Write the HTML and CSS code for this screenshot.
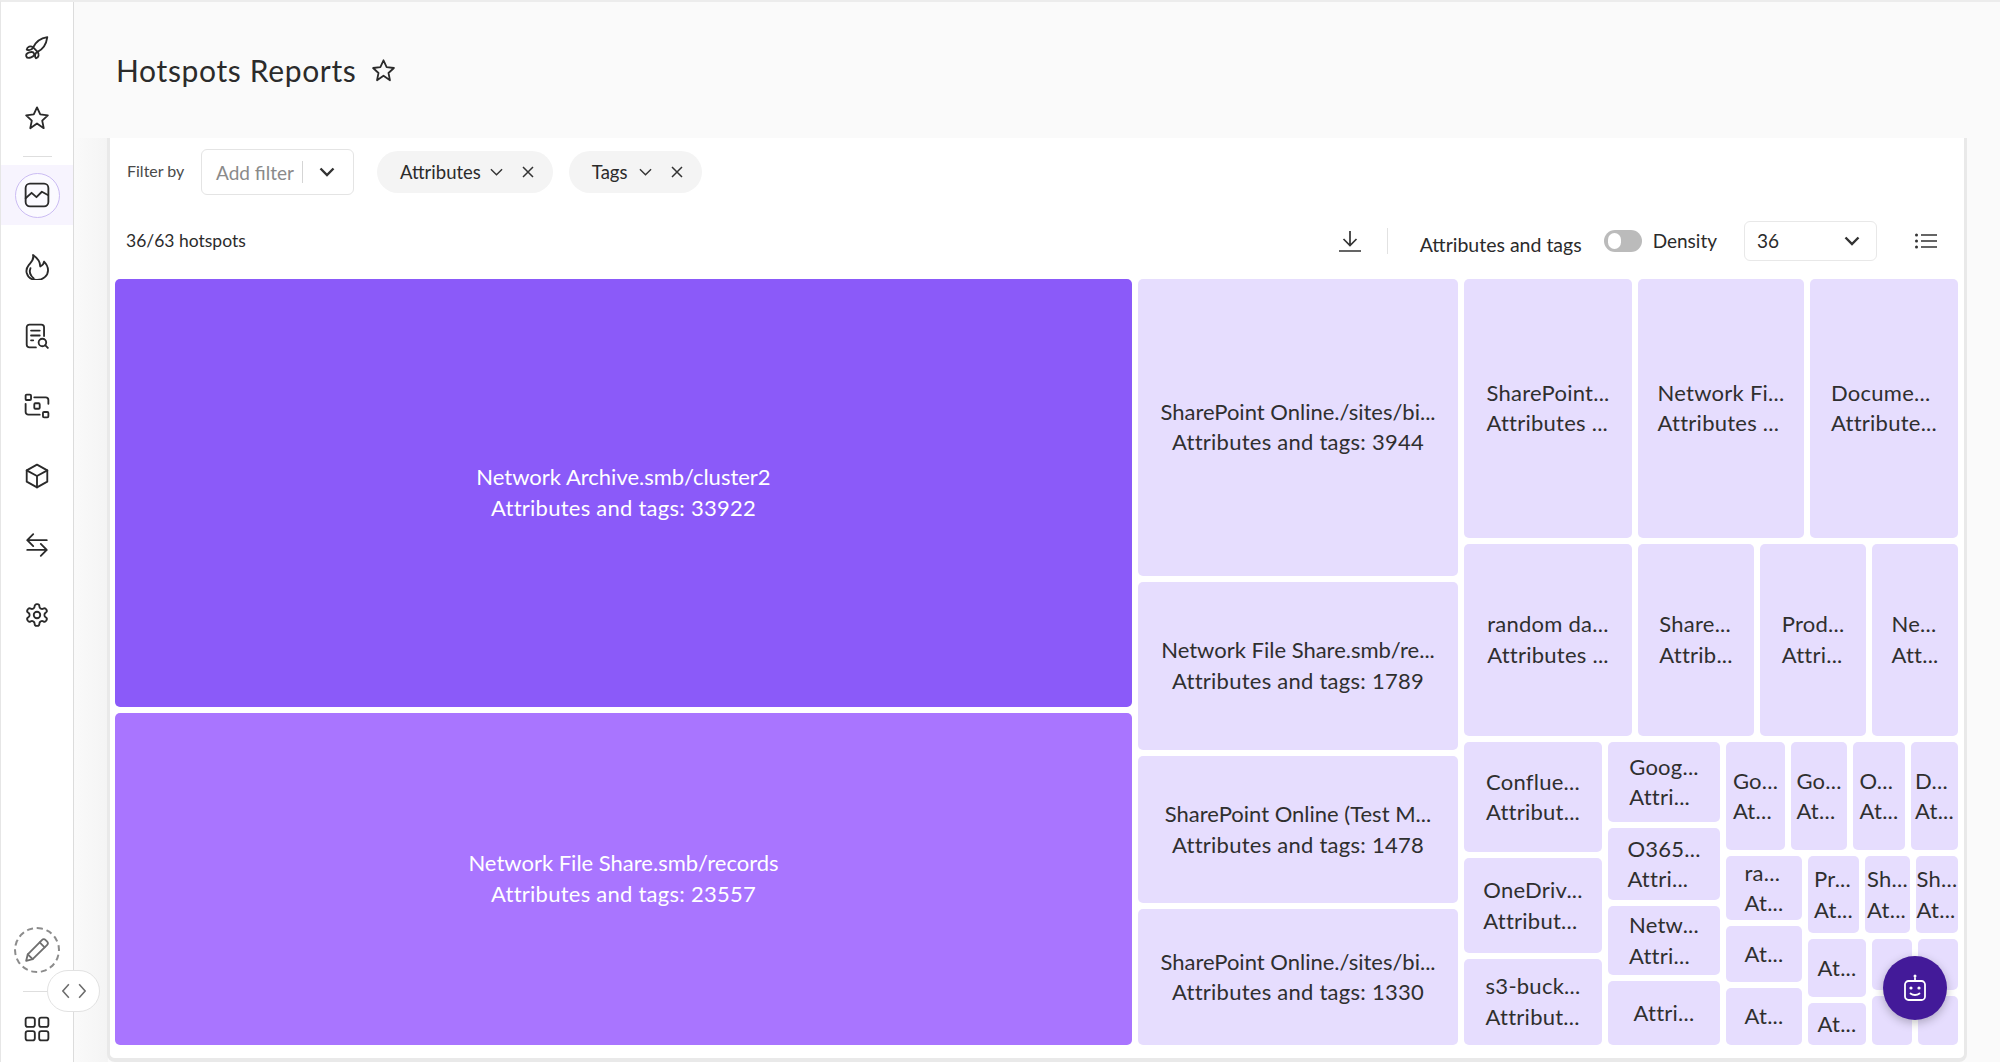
FILE: index.html
```html
<!DOCTYPE html>
<html lang="en">
<head>
    <meta charset="UTF-8">
    <title>Hotspots Reports</title>
    <link rel="stylesheet" href="styles.css">
</head>
<body>
    <div class="app">
        <nav class="sidebar">
            <a class="nav-item">
                <svg class="icon" viewBox="0 0 24 24"><path d="M21.500 2C15 3 10.500 7 8.500 11.500l4 4c4.500-2 8-6.500 9-13.500z"/><path d="M8.500 11.500C6 9.500 3 10.500 2.500 13.500c2.500 1 4.500.5 6-2z"/><ellipse cx="5.700" cy="18.400" rx="3.800" ry="2.400" transform="rotate(-20 5.700 18.400)"/><path d="M12.500 15.500c2 2 1 5.500-1.500 6-1.500-2-1-4.500 1.500-6z"/></svg>
            </a>
            <a class="nav-item">
                <svg class="icon" viewBox="0 0 24 24"><path d="M12 2.200l3 6.500 7 .9-5.200 4.800 1.400 7L12 17l-6.200 4.400 1.400-7L2 9.600l7-.9z"/></svg>
            </a>
            <div class="nav-divider"></div>
            <a class="nav-item nav-item-active">
                <span class="nav-ring">
                    <svg class="icon" viewBox="0 0 24 24"><rect x="1.500" y="1.500" width="21" height="21" rx="4"/><path d="M1.500 15l5.500-5 4.500 4 5-5 5.500 3"/></svg>
                </span>
            </a>
            <div class="nav-list">
                <a class="nav-item">
                    <svg class="icon" viewBox="0 0 24 24"><path d="M8.300 1C9.500 5 7 7 4.500 10c-2 2.500-2.700 5-2 7.500C3.700 21.500 7.500 24 12 24c5.500 0 10.200-4 10.200-9 0-3-1.700-6-3.700-8 0 2-1.500 3.500-3.500 4.500C15 7.500 12 3.500 8.300 1z"/><path d="M6 13c-1.300 3-.5 6.500 3 9.500"/></svg>
                </a>
                <a class="nav-item">
                    <svg class="icon" viewBox="0 0 24 24"><path d="M11 22.500H5a2.500 2.500 0 0 1-2.500-2.500V4A2.500 2.500 0 0 1 5 1.500h11A2.500 2.500 0 0 1 18.500 4v8"/><path d="M6.500 7h8M6.500 11.500h8M6.500 16h2"/><circle cx="17" cy="18" r="3.500"/><path d="M19.500 20.500l2.500 2.500"/></svg>
                </a>
                <a class="nav-item">
                    <svg class="icon" viewBox="0 0 24 24"><rect x="1.500" y="1.500" width="5" height="5" rx="1"/><rect x="9.500" y="9.500" width="5" height="5" rx="1"/><rect x="17.500" y="17.500" width="5" height="5" rx="1"/><path d="M9.500 4H20a2.500 2.500 0 0 1 2.500 2.500V10"/><path d="M14.500 20H4a2.500 2.500 0 0 1-2.500-2.500V10"/></svg>
                </a>
                <a class="nav-item">
                    <svg class="icon" viewBox="0 0 24 24"><path d="M12 1.500l9.500 5.300v10.400L12 22.500l-9.500-5.300V6.800z"/><path d="M2.500 6.800L12 12l9.500-5.200M12 12v10.500"/></svg>
                </a>
                <a class="nav-item">
                    <svg class="icon" viewBox="0 0 24 24"><path d="M21 7.500H3M8.500 2L3 7.500 8.500 13"/><path d="M3 16.500h18M15.500 11l5.500 5.500-5.500 5.500"/></svg>
                </a>
                <a class="nav-item">
                    <svg class="icon" viewBox="0 0 24 24"><path d="M12.220 2h-.44a2 2 0 0 0-2 2v.18a2 2 0 0 1-1 1.730l-.43.25a2 2 0 0 1-2 0l-.15-.08a2 2 0 0 0-2.730.73l-.22.38a2 2 0 0 0 .73 2.730l.15.1a2 2 0 0 1 1 1.720v.51a2 2 0 0 1-1 1.740l-.15.09a2 2 0 0 0-.73 2.730l.22.38a2 2 0 0 0 2.730.73l.15-.08a2 2 0 0 1 2 0l.43.25a2 2 0 0 1 1 1.730V20a2 2 0 0 0 2 2h.44a2 2 0 0 0 2-2v-.18a2 2 0 0 1 1-1.730l.43-.25a2 2 0 0 1 2 0l.15.08a2 2 0 0 0 2.730-.73l.22-.39a2 2 0 0 0-.73-2.730l-.15-.08a2 2 0 0 1-1-1.740v-.5a2 2 0 0 1 1-1.740l.15-.09a2 2 0 0 0 .73-2.730l-.22-.38a2 2 0 0 0-2.730-.73l-.15.08a2 2 0 0 1-2 0l-.43-.25a2 2 0 0 1-1-1.730V4a2 2 0 0 0-2-2z"/><circle cx="12" cy="12" r="3"/></svg>
                </a>
            </div>
            <div class="nav-bottom">
                <span class="edit-ring">
                    <svg class="icon icon-grey" viewBox="0 0 24 24"><path d="M2 22l1.500-6L16.500 2.800a2.500 2.500 0 0 1 3.500 0l1.200 1.200a2.500 2.500 0 0 1 0 3.500L8 20.500z"/><path d="M14.500 5l4.500 4.500M3.500 16L8 20.500"/></svg>
                </span>
                <div class="nav-divider nav-divider-short"></div>
                <a class="nav-item nav-item-small">
                    <svg class="icon" viewBox="0 0 24 24"><rect x="1.500" y="1.500" width="8.500" height="8.500" rx="2"/><rect x="14" y="1.500" width="8.500" height="8.500" rx="2"/><rect x="1.500" y="14" width="8.500" height="8.500" rx="2"/><rect x="14" y="14" width="8.500" height="8.500" rx="2"/></svg>
                </a>
            </div>
            <button class="collapse-btn">
                <svg viewBox="0 0 28 18"><path d="M8 1L1 9l7 8M20 1l7 8-7 8"/></svg>
            </button>
        </nav>

        <main class="main">
            <header class="page-header">
                <h1>Hotspots Reports</h1>
                <svg class="icon icon-title" viewBox="0 0 24 24"><path d="M12 2.200l3 6.500 7 .9-5.200 4.800 1.400 7L12 17l-6.200 4.400 1.400-7L2 9.600l7-.9z"/></svg>
            </header>

            <section class="card">
                <div class="filter-bar">
                    <span class="filter-label">Filter by</span>
                    <div class="filter-select">
                        <span class="filter-placeholder">Add filter</span>
                        <span class="filter-sep"></span>
                        <svg class="chev chev-bold" viewBox="0 0 16 10"><path d="M1.500 1.500L8 8l6.500-6.500"/></svg>
                    </div>
                    <div class="pill pill-attrs">
                        <span>Attributes</span>
                        <svg class="chev" viewBox="0 0 14 8"><path d="M1 1l6 6 6-6"/></svg>
                        <svg class="close" viewBox="0 0 12 12"><path d="M1 1l10 10M11 1L1 11"/></svg>
                    </div>
                    <div class="pill pill-tags">
                        <span>Tags</span>
                        <svg class="chev" viewBox="0 0 14 8"><path d="M1 1l6 6 6-6"/></svg>
                        <svg class="close" viewBox="0 0 12 12"><path d="M1 1l10 10M11 1L1 11"/></svg>
                    </div>
                </div>

                <div class="toolbar">
                    <span class="count">36/63 hotspots</span>
                    <div class="tools">
                        <svg class="download" viewBox="0 0 22 22"><path d="M11 1v14M4.500 9l6.500 6.500L17.500 9M0 21h22"/></svg>
                        <span class="tool-sep"></span>
                        <span class="metric">Attributes and tags</span>
                        <span class="toggle"><span class="toggle-knob"></span></span>
                        <span class="density">Density</span>
                        <div class="size-select">
                            <span>36</span>
                            <svg class="chev chev-bold" viewBox="0 0 16 10"><path d="M1.500 1.500L8 8l6.500-6.500"/></svg>
                        </div>
                        <svg class="list-icon" viewBox="0 0 22 16"><circle cx="1.500" cy="2" r="1.500"/><circle cx="1.500" cy="8" r="1.500"/><circle cx="1.500" cy="14" r="1.500"/><path d="M6 2h16M6 8h16M6 14h16"/></svg>
                    </div>
                </div>

                <div class="treemap">
                    <div class="tm-col" style="flex:1017">
                        <div class="tile tile-big tile-dark" style="flex:429"><div class="tile-text"><div>Network Archive.smb/cluster2</div><div>Attributes and tags: 33922</div></div></div>
                        <div class="tile tile-big tile-mid" style="flex:333"><div class="tile-text"><div>Network File Share.smb/records</div><div>Attributes and tags: 23557</div></div></div>
                    </div>
                    <div class="tm-col" style="flex:320">
                        <div class="tile tile-big" style="flex:297"><div class="tile-text"><div>SharePoint Online./sites/bi...</div><div>Attributes and tags: 3944</div></div></div>
                        <div class="tile tile-big" style="flex:169"><div class="tile-text"><div>Network File Share.smb/re...</div><div>Attributes and tags: 1789</div></div></div>
                        <div class="tile tile-big" style="flex:147"><div class="tile-text"><div>SharePoint Online (Test M...</div><div>Attributes and tags: 1478</div></div></div>
                        <div class="tile tile-big" style="flex:136"><div class="tile-text"><div>SharePoint Online./sites/bi...</div><div>Attributes and tags: 1330</div></div></div>
                    </div>
                    <div class="tm-col" style="flex:494">
                        <div class="tm-row" style="flex:259">
                            <div class="tile" style="flex:168"><div class="tile-text"><div>SharePoint...</div><div>Attributes ...</div></div></div>
                            <div class="tile" style="flex:166"><div class="tile-text"><div>Network Fi...</div><div>Attributes ...</div></div></div>
                            <div class="tile" style="flex:148"><div class="tile-text"><div>Docume...</div><div>Attribute...</div></div></div>
                        </div>
                        <div class="tm-row" style="flex:193">
                            <div class="tile" style="flex:168"><div class="tile-text"><div>random da...</div><div>Attributes ...</div></div></div>
                            <div class="tile" style="flex:116"><div class="tile-text"><div>Share...</div><div>Attrib...</div></div></div>
                            <div class="tile" style="flex:106"><div class="tile-text"><div>Prod...</div><div>Attri...</div></div></div>
                            <div class="tile" style="flex:86"><div class="tile-text"><div>Ne...</div><div>Att...</div></div></div>
                        </div>
                        <div class="tm-row" style="flex:303">
                            <div class="tm-col" style="flex:138">
                                <div class="tile" style="flex:110"><div class="tile-text"><div>Conflue...</div><div>Attribut...</div></div></div>
                                <div class="tile" style="flex:95"><div class="tile-text"><div>OneDriv...</div><div>Attribut...</div></div></div>
                                <div class="tile" style="flex:86"><div class="tile-text"><div>s3-buck...</div><div>Attribut...</div></div></div>
                            </div>
                            <div class="tm-col" style="flex:112">
                                <div class="tile" style="flex:80"><div class="tile-text"><div>Goog...</div><div>Attri...</div></div></div>
                                <div class="tile" style="flex:72"><div class="tile-text"><div>O365...</div><div>Attri...</div></div></div>
                                <div class="tile" style="flex:69"><div class="tile-text"><div>Netw...</div><div>Attri...</div></div></div>
                                <div class="tile" style="flex:64"><div class="tile-text"><div>Attri...</div></div></div>
                            </div>
                            <div class="tm-col" style="flex:232">
                                <div class="tm-row" style="flex:108">
                                    <div class="tile" style="flex:59"><div class="tile-text"><div>Go...</div><div>At...</div></div></div>
                                    <div class="tile" style="flex:56"><div class="tile-text"><div>Go...</div><div>At...</div></div></div>
                                    <div class="tile" style="flex:52"><div class="tile-text"><div>O...</div><div>At...</div></div></div>
                                    <div class="tile" style="flex:47"><div class="tile-text"><div>D...</div><div>At...</div></div></div>
                                </div>
                                <div class="tm-row" style="flex:189">
                                    <div class="tm-col" style="flex:76">
                                        <div class="tile" style="flex:64"><div class="tile-text"><div>ra...</div><div>At...</div></div></div>
                                        <div class="tile" style="flex:56"><div class="tile-text"><div>At...</div></div></div>
                                        <div class="tile" style="flex:57"><div class="tile-text"><div>At...</div></div></div>
                                    </div>
                                    <div class="tm-col" style="flex:150">
                                        <div class="tm-row" style="flex:77">
                                            <div class="tile" style="flex:51"><div class="tile-text"><div>Pr...</div><div>At...</div></div></div>
                                            <div class="tile" style="flex:45"><div class="tile-text"><div>Sh...</div><div>At...</div></div></div>
                                            <div class="tile" style="flex:42"><div class="tile-text"><div>Sh...</div><div>At...</div></div></div>
                                        </div>
                                        <div class="tm-row" style="flex:106">
                                            <div class="tm-col" style="flex:58">
                                                <div class="tile" style="flex:58"><div class="tile-text"><div>At...</div></div></div>
                                                <div class="tile" style="flex:42"><div class="tile-text"><div>At...</div></div></div>
                                            </div>
                                            <div class="tm-col" style="flex:40">
                                                <div class="tile" style="flex:51"></div>
                                                <div class="tile" style="flex:49"></div>
                                            </div>
                                            <div class="tm-col" style="flex:40">
                                                <div class="tile" style="flex:51"></div>
                                                <div class="tile" style="flex:49"></div>
                                            </div>
                                        </div>
                                    </div>
                                </div>
                            </div>
                        </div>
                    </div>
                </div>
            </section>
        </main>

        <button class="bot-btn">
            <svg viewBox="0 0 24 28"><circle cx="12" cy="2" r="1.500" class="bot-fill"/><path d="M12 4v3"/><rect x="2" y="7" width="20" height="19" rx="3.500"/><circle cx="8" cy="14" r="1.600" class="bot-fill"/><circle cx="16" cy="14" r="1.600" class="bot-fill"/><path d="M7.500 19.500c2.500 2 6.500 2 9 0"/></svg>
        </button>
    </div>
</body>
</html>
```

FILE: styles.css
```css
* {
    box-sizing: border-box;
}
body {
    margin: 0;
    background-color: #fafafa;
    color: #2b2b2b;
    font-family: 'Lato', 'Open Sans', sans-serif;
    overflow: hidden;
}
.app {
    display: flex;
    position: relative;
    height: 1062px;
    border-top: 2px solid #ececec;
    border-left: 1px solid #e6e6e6;
}
.icon {
    width: 26px;
    height: 26px;
    fill: none;
    stroke: #2a2a2a;
    stroke-width: 1.700;
    stroke-linecap: round;
    stroke-linejoin: round;
}
.icon-grey {
    stroke: #6f6f6f;
}

/* sidebar */
.sidebar {
    position: relative;
    flex: 0 0 73px;
    display: flex;
    flex-direction: column;
    padding-top: 11px;
    background-color: #fff;
    border-right: 1px solid #dcdcdc;
}
.nav-item {
    display: flex;
    align-items: center;
    justify-content: center;
    height: 70px;
}
.nav-divider {
    align-self: center;
    width: 29px;
    height: 1px;
    margin: 3px 0 8px;
    background-color: #dedede;
}
.nav-divider-short {
    align-self: flex-start;
    width: 26px;
    margin: 18px 0 4px 22px;
}
.nav-item-active {
    height: 60px;
    background-color: #f7f4fe;
}
.nav-ring {
    display: flex;
    align-items: center;
    justify-content: center;
    width: 45px;
    height: 45px;
    background-color: #fbfaff;
    border: 1px solid #cbbcf3;
    border-radius: 50%;
}
.nav-list {
    margin-top: 7px;
}
.nav-list .nav-item {
    height: 69.600px;
}
.nav-bottom {
    display: flex;
    flex-direction: column;
    align-items: center;
    margin-top: auto;
}
.edit-ring {
    display: flex;
    align-items: center;
    justify-content: center;
    width: 46px;
    height: 46px;
    border: 2px dashed #8c8c8c;
    border-radius: 50%;
}
.nav-item-small {
    height: 66px;
}
.collapse-btn {
    position: absolute;
    left: 46px;
    bottom: 50px;
    display: flex;
    align-items: center;
    justify-content: center;
    width: 53px;
    height: 42px;
    padding: 0;
    background-color: #fff;
    border: 1px solid #e2e2e2;
    border-radius: 21px;
}
.collapse-btn svg {
    width: 24px;
    height: 16px;
    fill: none;
    stroke: #6d6d6d;
    stroke-width: 1.800;
}

/* page */
.main {
    flex: 1;
    min-width: 0;
    display: flex;
    flex-direction: column;
    background: linear-gradient(90deg, #fafafa 0, #f4f4f4 34px, #fafafa 34px);
}
.page-header {
    display: flex;
    align-items: center;
    gap: 15px;
    flex: 0 0 136px;
    padding-left: 42px;
    background-color: #fafafa;
}
.page-header h1 {
    margin: 0;
    font-size: 30px;
    font-weight: 400;
    letter-spacing: 0.650px;
}
.icon-title {
    width: 25px;
    height: 25px;
}
.card {
    flex: 1;
    min-height: 0;
    display: flex;
    flex-direction: column;
    margin: 0 33px 0 33px;
    padding: 0 6px 13px 5px;
    background-color: #fff;
    border: 3px solid #e9e9e9;
    border-width: 0 3px 4px 3px;
    border-radius: 0 0 8px 8px;
}
.filter-bar {
    display: flex;
    align-items: center;
    height: 56px;
    margin-top: 6px;
    padding-left: 12px;
}
.filter-label {
    width: 74px;
    margin-bottom: 3px;
    font-size: 16px;
    color: #4a4a4a;
}
.filter-select {
    display: flex;
    align-items: center;
    width: 153px;
    height: 46px;
    margin-right: 23px;
    padding: 0 16px 0 14px;
    background-color: #fff;
    border: 1px solid #e4e4e4;
    border-radius: 6px;
}
.filter-placeholder {
    font-size: 19px;
    color: #8a8a8a;
}
.filter-sep {
    width: 1px;
    height: 22px;
    margin: 0 16px 0 8px;
    background-color: #d5d5d5;
}
.chev {
    flex: none;
    width: 13px;
    height: 8px;
    fill: none;
    stroke: #333;
    stroke-width: 1.500;
}
.chev-bold {
    width: 16px;
    height: 10px;
    stroke-width: 2.400;
}
.pill {
    display: flex;
    align-items: center;
    height: 42px;
    padding: 0 19px 0 23px;
    background-color: #f4f4f4;
    border-radius: 21px;
    font-size: 18.500px;
}
.pill-attrs {
    margin-right: 16px;
}
.pill .chev {
    margin-left: 9px;
}
.pill-tags .chev {
    margin-left: 12px;
}
.close {
    width: 12px;
    height: 12px;
    margin-left: 19px;
    fill: none;
    stroke: #333;
    stroke-width: 1.500;
}
.toolbar {
    display: flex;
    align-items: center;
    justify-content: space-between;
    height: 79px;
    padding: 2px 21px 0 11px;
}
.count {
    font-size: 17.500px;
}
.tools {
    display: flex;
    align-items: center;
}
.download {
    width: 22px;
    height: 22px;
    fill: none;
    stroke: #333;
    stroke-width: 1.700;
}
.tool-sep {
    width: 1px;
    height: 26px;
    margin: 0 32px 0 26px;
    background-color: #e2e2e2;
}
.metric {
    margin: 8px 22px 0 0;
    font-size: 19.500px;
}
.toggle {
    display: flex;
    align-items: center;
    width: 38px;
    height: 22px;
    padding-left: 4px;
    background-color: #bbb;
    border-radius: 11px;
}
.toggle-knob {
    width: 13px;
    height: 16px;
    background-color: #fff;
    border-radius: 8px;
}
.density {
    margin: 0 27px 0 11px;
    font-size: 19px;
}
.size-select {
    display: flex;
    align-items: center;
    justify-content: space-between;
    width: 133px;
    height: 40px;
    margin-right: 38px;
    padding: 0 16px 0 12px;
    background-color: #fff;
    border: 1px solid #e8e8e8;
    border-radius: 6px;
    font-size: 19px;
}
.list-icon {
    width: 22px;
    height: 16px;
    fill: #333;
    stroke: #333;
    stroke-width: 0;
}
.list-icon path {
    fill: none;
    stroke-width: 1.700;
}

/* treemap */
.treemap {
    flex: 1;
    min-height: 0;
    display: flex;
    gap: 6px;
}
.tm-col,
.tm-row {
    min-width: 0;
    min-height: 0;
    display: flex;
    gap: 6px;
}
.tm-col {
    flex-direction: column;
}
.tile {
    min-width: 0;
    min-height: 0;
    display: flex;
    align-items: center;
    justify-content: center;
    overflow: hidden;
    background-color: #e6ddfe;
    border-radius: 5px;
    font-size: 22px;
    letter-spacing: 0.250px;
    line-height: 30.600px;
    color: #2f2f2f;
    white-space: nowrap;
}
.tile-big {
    text-align: center;
}
.tile-big .tile-text div:first-child {
    letter-spacing: 0;
}
.tile-dark {
    background-color: #8b5af9;
    color: #fff;
}
.tile-mid {
    background-color: #a975ff;
    color: #fff;
}

/* assistant button */
.bot-btn {
    position: absolute;
    right: 53px;
    bottom: 42px;
    display: flex;
    align-items: center;
    justify-content: center;
    width: 64px;
    height: 64px;
    padding: 0;
    background-color: #431a99;
    border: none;
    border-radius: 50%;
    box-shadow: 0 3px 10px rgba(0, 0, 0, 0.25);
}
.bot-btn svg {
    width: 24px;
    height: 28px;
    fill: none;
    stroke: #fff;
    stroke-width: 1.800;
    stroke-linecap: round;
}
.bot-fill {
    fill: #fff;
    stroke: none;
}
```
